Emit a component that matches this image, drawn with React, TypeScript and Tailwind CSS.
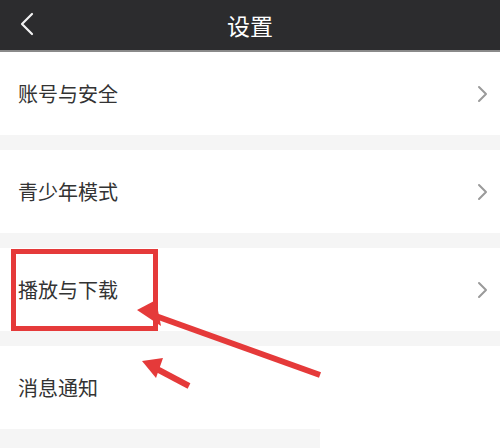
import React from "react";

const Chevron = () => (
  <svg width="12" height="18" viewBox="0 0 12 18" className="shrink-0">
    <path d="M3 2 L10 9 L3 16" fill="none" stroke="#9a9a9a" strokeWidth="2" strokeLinecap="round" strokeLinejoin="round" />
  </svg>
);

const Row = ({ label, chevron = true }: { label: string; chevron?: boolean }) => (
  <div className="h-[83px] bg-white flex items-center justify-between pl-[18px] pr-[12px]">
    <span className="text-[20px] text-[#333333] leading-none">{label}</span>
    {chevron && <Chevron />}
  </div>
);

export default function App() {
  return (
    <div
      className="relative w-[500px] h-[448px] overflow-hidden bg-[#f5f5f5]"
      style={{ fontFamily: '"Noto Sans CJK SC", "Noto Sans", sans-serif' }}
    >
      <div className="h-[50px] bg-[#2c2c2e] flex items-center justify-center relative">
        <svg width="16" height="24" viewBox="0 0 16 24" className="absolute left-[19px] top-[12px]">
          <path d="M13 2 L3 12 L13 22" fill="none" stroke="#f2f2f2" strokeWidth="2.2" strokeLinecap="round" strokeLinejoin="round" />
        </svg>
        <span className="text-white text-[23px] leading-none">设置</span>
      </div>
      <div className="h-[2px] bg-[#8a8a8a]" />
      <Row label="账号与安全" />
      <div className="h-[15px]" />
      <Row label="青少年模式" />
      <div className="h-[15px]" />
      <div className="h-[84px]"><Row label="播放与下载" /></div>
      <div className="h-[14px]" />
      <Row label="消息通知" />

      <div className="absolute left-[320px] top-[360px] w-[180px] h-[88px] bg-white" />

      <div className="absolute left-[11px] top-[249px] w-[147px] h-[82px] border-[5px] border-[#e53a3a]" />

      <svg className="absolute left-0 top-0" width="500" height="448" viewBox="0 0 500 448">
        <line x1="153" y1="315" x2="320" y2="375" stroke="#e53a3a" strokeWidth="6" />
        <polygon points="137,310 156,300 161,326" fill="#e53a3a" />
        <line x1="155" y1="368" x2="189" y2="386" stroke="#e53a3a" strokeWidth="6" />
        <polygon points="142,361 163,358 156,378" fill="#e53a3a" />
      </svg>
    </div>
  );
}
